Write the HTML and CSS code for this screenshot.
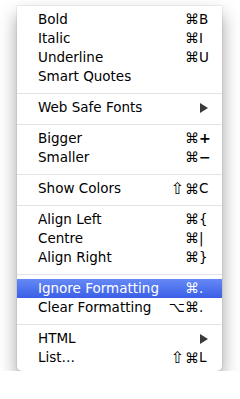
FILE: index.html
```html
<!DOCTYPE html>
<html>
<head>
<meta charset="utf-8">
<link rel="stylesheet" href="styles.css">
</head>
<body>
<div class="menu">
  <div class="item"><span class="label">Bold</span><span class="mods">⌘</span><span class="key">B</span></div>
  <div class="item"><span class="label">Italic</span><span class="mods">⌘</span><span class="key">I</span></div>
  <div class="item"><span class="label">Underline</span><span class="mods">⌘</span><span class="key">U</span></div>
  <div class="item"><span class="label">Smart Quotes</span></div>
  <div class="sep"></div>
  <div class="item"><span class="label">Web Safe Fonts</span><svg class="arrow" width="8" height="10" viewBox="0 0 8 10"><path d="M0 0L8 5L0 10Z"/></svg></div>
  <div class="sep"></div>
  <div class="item"><span class="label">Bigger</span><span class="mods">⌘</span><span class="key plus">+</span></div>
  <div class="item"><span class="label">Smaller</span><span class="mods">⌘</span><span class="key minus">−</span></div>
  <div class="sep"></div>
  <div class="item"><span class="label">Show Colors</span><span class="mods"><span class="shift">⇧</span>⌘</span><span class="key">C</span></div>
  <div class="sep"></div>
  <div class="item"><span class="label">Align Left</span><span class="mods">⌘</span><span class="key">{</span></div>
  <div class="item"><span class="label">Centre</span><span class="mods">⌘</span><span class="key">|</span></div>
  <div class="item"><span class="label">Align Right</span><span class="mods">⌘</span><span class="key">}</span></div>
  <div class="sep"></div>
  <div class="item active"><span class="label">Ignore Formatting</span><span class="mods">⌘</span><span class="key">.</span></div>
  <div class="item"><span class="label">Clear Formatting</span><span class="mods">⌥⌘</span><span class="key">.</span></div>
  <div class="sep"></div>
  <div class="item"><span class="label">HTML</span><svg class="arrow" width="8" height="10" viewBox="0 0 8 10"><path d="M0 0L8 5L0 10Z"/></svg></div>
  <div class="item"><span class="label">List…</span><span class="mods"><span class="shift">⇧</span>⌘</span><span class="key">L</span></div>
</div>
</body>
</html>
```
FILE: styles.css
```css
html, body {
  margin: 0;
  padding: 0;
  background: #ffffff;
}
body {
  padding: 6px 0 0 17px;
  font-family: "DejaVu Sans", "Noto Sans", sans-serif;
  font-size: 13.5px;
  color: #000;
}
.menu {
  width: 205px;
  padding: 4px 0 4px 0;
  background: #ffffff;
  border-radius: 0 0 5px 5px;
  box-shadow: 0 0 0 1px rgba(0,0,0,0.05), 0 9px 18px rgba(0,0,0,0.38);
}
.item {
  display: flex;
  align-items: center;
  height: 19px;
  padding: 0 11px 0 21px;
  line-height: 19px;
  white-space: nowrap;
}
.label {
  flex: 1;
}
.mods {
  text-align: right;
  font-size: 14px;
}
.shift {
  font-size: 16px;
  margin-right: 1px;
}
.key {
  width: 12px;
  text-align: left;
}
.plus,
.minus {
  font-weight: bold;
  font-size: 14px;
}
.arrow {
  fill: #3a3a3a;
  margin-right: 3px;
}
.sep {
  height: 12px;
  display: flex;
  align-items: center;
}
.sep::before {
  content: "";
  flex: 1;
  height: 1px;
  margin-top: 2px;
  background: #e3e3e3;
}
.active {
  background: linear-gradient(#6689f5, #3a5fe7);
  color: #fff;
}
```
